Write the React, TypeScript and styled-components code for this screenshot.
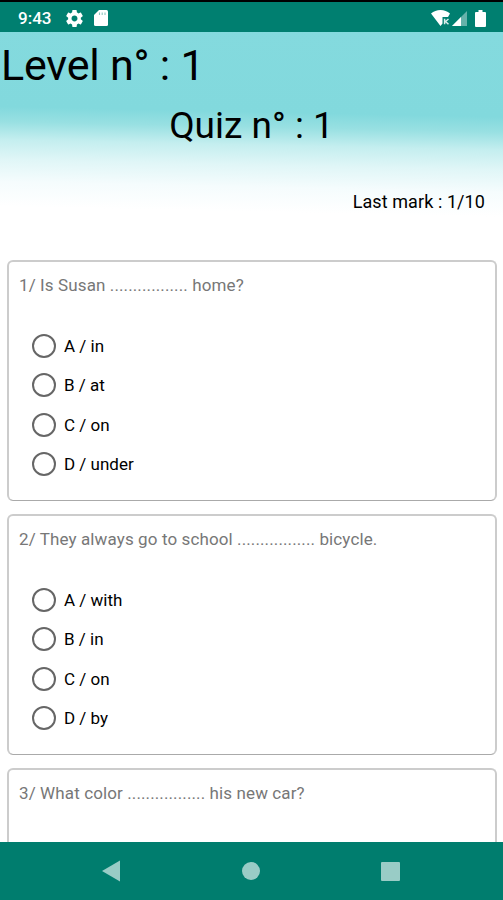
import React from "react";
import styled, { createGlobalStyle } from "styled-components";

const GlobalStyle = createGlobalStyle`
  * { box-sizing: border-box; }
  html, body { margin: 0; padding: 0; background: #fff; }
  body { font-family: Roboto, "Liberation Sans", sans-serif; color: #000; overflow: hidden; }
`;

const Screen = styled.div`
  width: 503px;
  height: 900px;
  display: flex;
  flex-direction: column;
  overflow: hidden;
  background: #fff;
`;

const StatusBar = styled.header`
  flex: none;
  height: 32px;
  border-top: 2px solid #000;
  background: #007f70;
  display: flex;
  align-items: center;
  padding: 2px 17px 0 18px;
  color: #fff;
`;

const Clock = styled.span`
  width: 48px;
  font-size: 17px;
  font-weight: 500;
  line-height: 20px;
  white-space: nowrap;
`;

const StatusIcon = styled.svg<{ $gap?: number }>`
  flex: none;
  display: block;
  margin-left: ${(p) => p.$gap ?? 0}px;
`;

const Spacer = styled.div`
  flex: 1;
`;

const Content = styled.main`
  flex: 1;
  min-height: 0;
  overflow: hidden;
  background: linear-gradient(
    181.2deg,
    #84dade 0,
    #82d9dd 85px,
    #98e0e2 100px,
    #c4eeef 118px,
    #e0f6f7 138px,
    #f5fcfd 160px,
    #fff 185px
  );
`;

const Level = styled.h1`
  margin: 0;
  padding: 7px 0 0 1px;
  height: 70px;
  font-size: 43px;
  font-weight: 400;
  line-height: 52px;
  letter-spacing: -0.2px;
  white-space: nowrap;
`;

const QuizTitle = styled.h2`
  margin: 0;
  height: 80px;
  padding-top: 1px;
  font-size: 37px;
  font-weight: 400;
  line-height: 46px;
  text-align: center;
  white-space: nowrap;
`;

const LastMark = styled.p`
  margin: 0;
  height: 77.5px;
  padding: 9px 18px 0 0;
  font-size: 18px;
  line-height: 22px;
  text-align: right;
  letter-spacing: 0.08px;
`;

const Questions = styled.section`
  display: flex;
  flex-direction: column;
  gap: 13px;
  padding: 0 6px 0 7px;
`;

const Card = styled.article`
  height: 241px;
  flex: none;
  border: 2px solid #ccc;
  border-bottom: 1px solid #aaa;
  border-radius: 6px;
  background: #fff;
  padding: 11px 10px 0;
`;

const Prompt = styled.p`
  margin: 0;
  height: 54px;
  font-size: 17px;
  line-height: 24px;
  letter-spacing: 0.11px;
  color: #777;
  white-space: nowrap;
`;

const Option = styled.label`
  display: flex;
  align-items: center;
  height: 39.3px;
  padding-left: 13px;
  gap: 8px;
  font-size: 17px;
  line-height: 22px;
`;

const Radio = styled.span`
  flex: none;
  width: 24px;
  height: 24px;
  border: 2px solid #666;
  border-radius: 50%;
`;

const NavBar = styled.nav`
  flex: none;
  height: 58px;
  background: #007d6e;
  display: flex;
  align-items: center;
  justify-content: space-between;
  padding: 0 103px 0 102px;
`;

const NavIcon = styled.svg`
  display: block;
  fill: #99ccc6;
`;

const questions = [
  { text: "1/ Is Susan ................. home?", options: ["A / in", "B / at", "C / on", "D / under"] },
  { text: "2/ They always go to school ................. bicycle.", options: ["A / with", "B / in", "C / on", "D / by"] },
  { text: "3/ What color ................. his new car?", options: [] },
];

export default function App() {
  return (
    <>
      <GlobalStyle />
      <Screen>
        <StatusBar>
          <Clock>9:43</Clock>
          <StatusIcon width="17" height="17" viewBox="2 2 20 20" fill="#fff">
            <path d="M19.43 12.98c.04-.32.07-.64.07-.98s-.03-.66-.07-.98l2.11-1.65c.19-.15.24-.42.12-.64l-2-3.46c-.12-.22-.39-.3-.61-.22l-2.49 1c-.52-.4-1.08-.73-1.69-.98l-.38-2.65A.488.488 0 0 0 14 2h-4c-.25 0-.46.18-.49.42l-.38 2.65c-.61.25-1.17.59-1.69.98l-2.49-1c-.23-.09-.49 0-.61.22l-2 3.46c-.13.22-.07.49.12.64l2.11 1.65c-.04.32-.07.65-.07.98s.03.66.07.98l-2.11 1.65c-.19.15-.24.42-.12.64l2 3.46c.12.22.39.3.61.22l2.49-1c.52.4 1.08.73 1.69.98l.38 2.65c.03.24.24.42.49.42h4c.25 0 .46-.18.49-.42l.38-2.65c.61-.25 1.17-.59 1.69-.98l2.49 1c.23.09.49 0 .61-.22l2-3.46c.12-.22.07-.49-.12-.64l-2.11-1.65zM12 15.5c-1.93 0-3.5-1.57-3.5-3.5s1.57-3.5 3.5-3.5 3.5 1.57 3.5 3.5-1.57 3.5-3.5 3.5z" />
          </StatusIcon>
          <StatusIcon $gap={11} width="14" height="16" viewBox="0 0 14 16">
            <path fill="#fff" d="M5 0h7.5Q14 0 14 1.500V14.500Q14 16 12.500 16H1.500Q0 16 0 14.500V5Z" />
            <path stroke="#8cc5bf" strokeWidth="1.100" d="M5.500 2.500v2.500M8.200 2.500v2.500M11 2.500v2.500" />
          </StatusIcon>
          <Spacer />
          <StatusIcon width="19" height="16" viewBox="0 0 19 16">
            <path fill="#fff" d="M0 3.500Q4 0 9.500 0T19 3.500L17 7H11.500V13.500L9.500 16Z" />
            <path fill="none" stroke="#d9eeeb" strokeWidth="1.500" d="M13.600 8.700v5.500M17.500 9l-3 2.500 3 2.700" />
          </StatusIcon>
          <StatusIcon $gap={2} width="15" height="15" viewBox="0 0 15 15">
            <path fill="#66b2aa" d="M15 0V15H0Z" />
            <path fill="#fff" d="M9 6V15H0Z" />
          </StatusIcon>
          <StatusIcon $gap={8} width="11" height="17" viewBox="0 0 11 17">
            <path fill="#fff" d="M3.500 0h4v2H10Q11 2 11 3V16Q11 17 10 17H1Q0 17 0 16V3Q0 2 1 2h2.500Z" />
          </StatusIcon>
        </StatusBar>
        <Content>
          <Level>Level n° : 1</Level>
          <QuizTitle>Quiz n° : 1</QuizTitle>
          <LastMark>Last mark : 1/10</LastMark>
          <Questions>
            {questions.map((q) => (
              <Card key={q.text}>
                <Prompt>{q.text}</Prompt>
                {q.options.map((option) => (
                  <Option key={option}>
                    <Radio />
                    {option}
                  </Option>
                ))}
              </Card>
            ))}
          </Questions>
        </Content>
        <NavBar>
          <NavIcon width="18" height="22" viewBox="0 0 18 22">
            <path d="M18 0.500V21.500L0 11Z" />
          </NavIcon>
          <NavIcon width="18" height="18" viewBox="0 0 18 18">
            <circle cx="9" cy="9" r="9" />
          </NavIcon>
          <NavIcon width="19" height="19" viewBox="0 0 19 19">
            <rect width="19" height="19" rx="1" />
          </NavIcon>
        </NavBar>
      </Screen>
    </>
  );
}
